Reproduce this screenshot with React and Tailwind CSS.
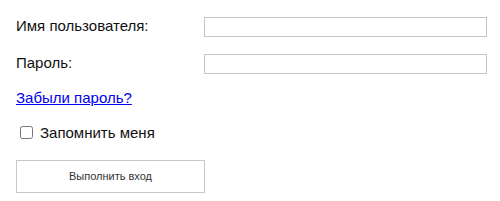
export default function App() {
  return (
    <div className="w-[500px] h-[201px] bg-white pl-4 pt-[17px] text-[15px] text-[#111] font-['Liberation_Sans',Arial,sans-serif]">
      <div className="flex items-center h-[20px]">
        <label className="w-[188px] leading-none mb-[4px]">Имя пользователя:</label>
        <input type="text" className="w-[283px] h-[20px] border border-[#c4c4c4] bg-white outline-none" />
      </div>
      <div className="flex items-center h-[20px] mt-[17px]">
        <label className="w-[188px] leading-none mb-[4px]">Пароль:</label>
        <input type="password" className="w-[283px] h-[20px] border border-[#c4c4c4] bg-white outline-none" />
      </div>
      <div className="mt-[13px] h-[20px] flex items-center">
        <a href="#" className="text-[#0000ee] underline leading-none">Забыли пароль?</a>
      </div>
      <div className="mt-[15px] flex items-center h-[20px] gap-[7px] pl-1">
        <input type="checkbox" className="w-[13px] h-[13px] m-0" />
        <span className="leading-none">Запомнить меня</span>
      </div>
      <button className="mt-[18px] w-[189px] h-[33px] border border-[#c8c8c8] bg-white text-[11px] text-[#333] flex items-center justify-center">
        Выполнить вход
      </button>
    </div>
  );
}
